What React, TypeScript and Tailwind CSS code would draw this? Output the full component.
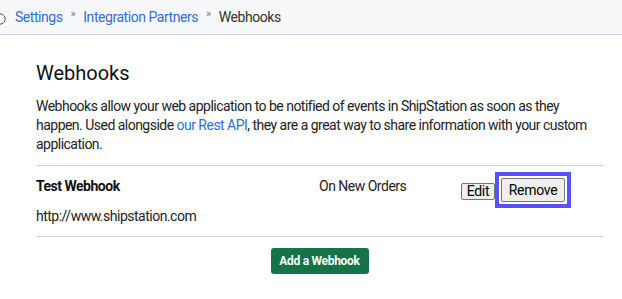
import React from 'react'

const font = { fontFamily: 'Roboto, "Liberation Sans", sans-serif' }

function Breadcrumb() {
  return (
    <div className="flex h-[35px] items-center border-b border-[#cfd3d8] bg-[#f7f8fa] text-[14px] tracking-[-0.45px]">
      <svg className="-ml-[6px] mr-[9px] mt-[3px]" width="12" height="12" viewBox="0 0 12 12">
        <circle cx="6" cy="6" r="5.2" fill="none" stroke="#555" strokeWidth="1" />
      </svg>
      <a className="text-[#2f6fdb]">Settings</a>
      <span className="mx-[8px] -mt-[6px] text-[11px] text-[#777]">»</span>
      <a className="text-[#2f6fdb]">Integration Partners</a>
      <span className="mx-[8px] -mt-[6px] text-[11px] text-[#777]">»</span>
      <span className="text-[#333]">Webhooks</span>
    </div>
  )
}

export default function App() {
  return (
    <div className="h-[299px] w-[622px] overflow-hidden bg-white" style={font}>
      <Breadcrumb />

      <div className="mx-[36px] mt-[24px] w-[567px]">
        <h1 className="text-[20px] leading-[28px] text-[#111]">Webhooks</h1>

        <p className="mt-[10px] text-[14px] leading-[19px] tracking-[-0.52px] text-[#222]">
          Webhooks allow your web application to be notified of events in ShipStation as soon as they
          happen. Used alongside <a className="text-[#2f6fdb]">our Rest API</a>, they are a great way to
          share information with your custom application.
        </p>

        <div className="mt-[11px] border-y border-[#c5d0dc] py-[10px] text-[14px] leading-[20px] tracking-[-0.5px] text-[#222]">
          <div className="flex">
            <div className="w-[283px] font-bold text-[#111]">Test Webhook</div>
            <div className="w-[142px]">On New Orders</div>
            <div className="-mb-[7px] mt-[7px] flex h-[20px] items-start">
              <button className="h-[17px] w-[34px] rounded-[2px] border border-[#767676] bg-[#efefef] text-[14px] leading-[15px] tracking-[-0.3px] text-black">
                Edit
              </button>
              {/* highlighted action */}
              <span className="-mt-[11px] border-4 border-[#5b50ff] p-[2px]">
                <button className="block h-[24px] w-[64px] rounded-[2px] border border-[#767676] bg-[#efefef] text-[14px] leading-[22px] tracking-[-0.3px] text-black">
                  Remove
                </button>
              </span>
            </div>
          </div>
          <div className="mt-[10px]">http://www.shipstation.com</div>
        </div>

        <div className="mt-[11px] flex justify-center">
          <button className="h-[26px] w-[98px] rounded-[3px] bg-[#157347] text-[12px] font-bold tracking-[-0.3px] text-white">
            Add a Webhook
          </button>
        </div>
      </div>
    </div>
  )
}
